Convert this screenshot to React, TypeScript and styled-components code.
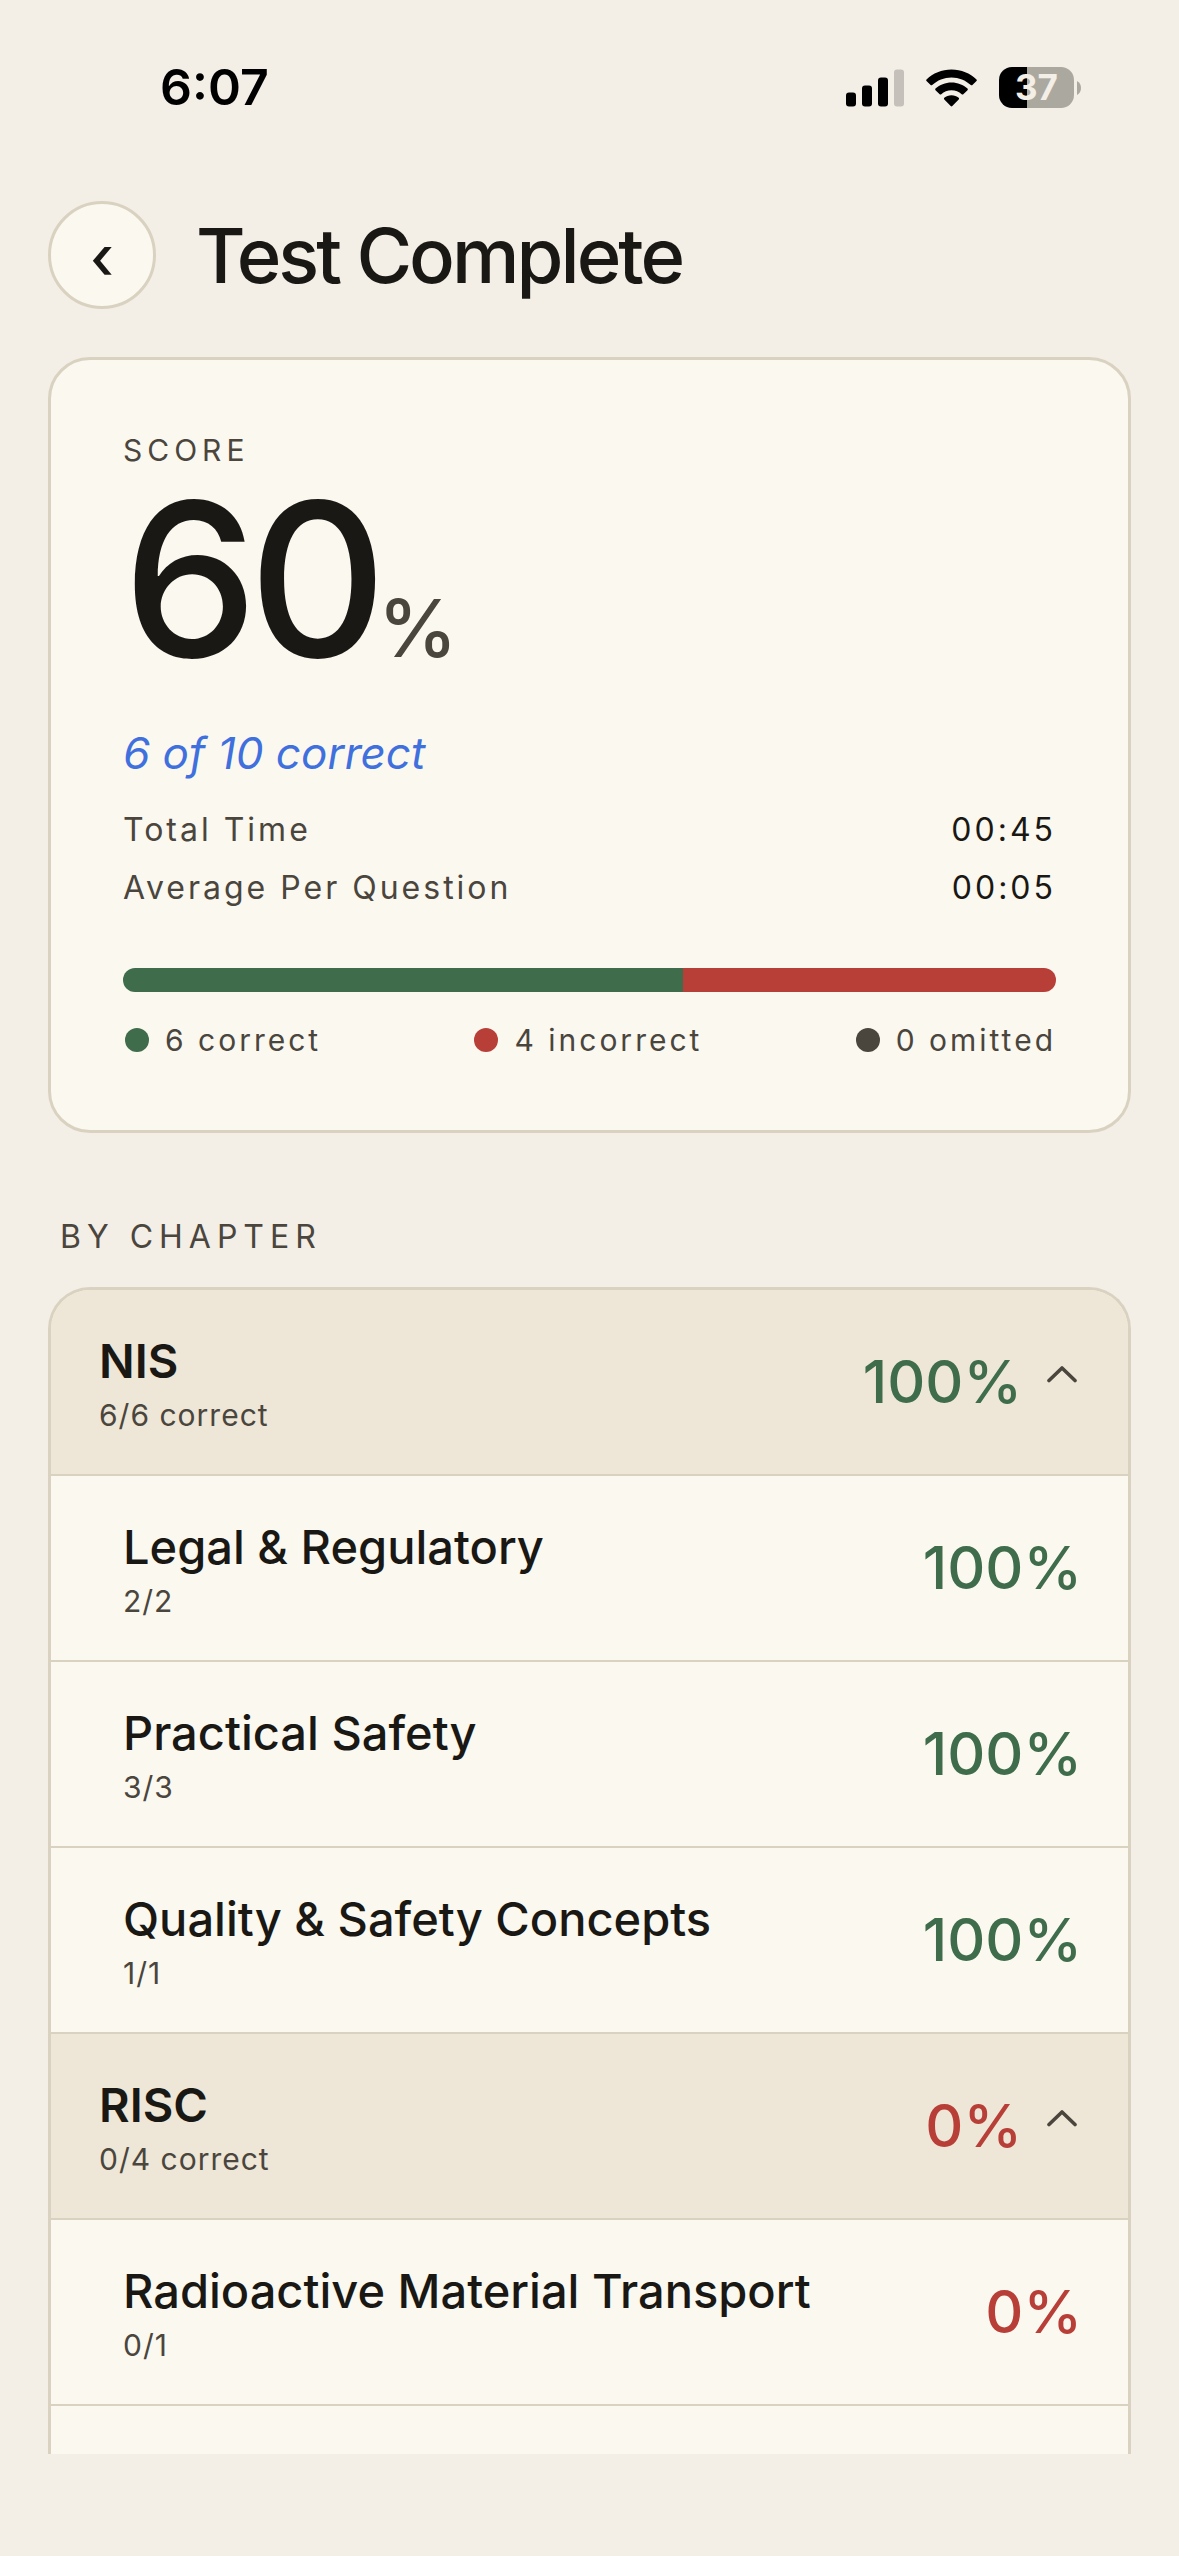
import React, { useState } from "react";
import styled, { createGlobalStyle } from "styled-components";

const color = {
  page: "#f3eee6",
  card: "#fbf8f0",
  band: "#eee6d6",
  line: "#d9d2c1",
  ink: "#1a1814",
  muted: "#4a453d",
  green: "#3f6c4b",
  red: "#b83f38",
  blue: "#3f70de",
};

const GlobalStyle = createGlobalStyle`
  *, *::before, *::after { box-sizing: border-box; }
  body {
    margin: 0;
    background: ${color.page};
    color: ${color.ink};
    font-family: Inter, "Liberation Sans", sans-serif;
  }
  h1, h2, p, dl, dd, ul { margin: 0; padding: 0; }
  ul { list-style: none; }
  button { font: inherit; color: inherit; cursor: pointer; }
`;

const Screen = styled.div`
  display: flex;
  flex-direction: column;
  height: 100vh;
  padding-bottom: 102px;
  overflow: hidden;
`;

const StatusBar = styled.div`
  display: flex;
  flex: none;
  align-items: center;
  justify-content: space-between;
  padding: 60px 98px 86px 160px;
`;

const Clock = styled.time`
  font-size: 50px;
  font-weight: 600;
  line-height: 55px;
  color: #000;
`;

const StatusIcons = styled.div`
  display: flex;
  align-items: center;
  gap: 22px;
`;

const Battery = styled.div`
  display: flex;
  align-items: center;
  gap: 3px;
`;

const BatteryBody = styled.div`
  display: flex;
  align-items: center;
  justify-content: center;
  width: 75px;
  height: 41px;
  border-radius: 13px;
  background: linear-gradient(to right, #000 37%, #aba8a0 37%);
  color: ${color.page};
  font-size: 35px;
  font-weight: 700;
  line-height: 41px;
`;

const TopBar = styled.header`
  display: flex;
  flex: none;
  align-items: center;
  gap: 40px;
  padding: 0 48px 48px;
`;

const BackButton = styled.button`
  display: flex;
  flex: none;
  align-items: center;
  justify-content: center;
  width: 108px;
  height: 108px;
  padding: 4px 0 0;
  border: 3px solid ${color.line};
  border-radius: 50%;
  background: ${color.card};
  font-size: 60px;
  font-weight: 500;
  line-height: 60px;
`;

const Title = styled.h1`
  font-size: 76px;
  font-weight: 500;
  line-height: 92px;
  letter-spacing: -3px;
`;

const Content = styled.main`
  display: flex;
  flex: 1;
  flex-direction: column;
  min-height: 0;
  padding: 0 48px;
`;

const ScoreCard = styled.section`
  flex: none;
  padding: 72px;
  border: 3px solid ${color.line};
  border-radius: 42px;
  background: ${color.card};
`;

const ScoreLabel = styled.h2`
  font-size: 30px;
  font-weight: 400;
  line-height: 36px;
  letter-spacing: 5px;
  color: ${color.muted};
`;

const ScoreValue = styled.p`
  font-size: 214px;
  font-weight: 500;
  line-height: 224px;
  letter-spacing: -9px;
`;

const PercentSign = styled.span`
  font-size: 80px;
  line-height: 1;
  letter-spacing: 0;
  color: ${color.muted};
`;

const ScoreNote = styled.p`
  margin-top: 32px;
  font-size: 44px;
  font-style: italic;
  line-height: 58px;
  color: ${color.blue};
`;

const Timings = styled.dl`
  display: flex;
  flex-direction: column;
  gap: 18px;
  margin-top: 28px;
`;

const Timing = styled.div`
  display: flex;
  justify-content: space-between;
  font-size: 32px;
  line-height: 40px;
  letter-spacing: 3px;
`;

const TimingName = styled.dt`
  color: ${color.muted};
`;

const Bar = styled.div`
  display: flex;
  height: 24px;
  margin-top: 60px;
  overflow: hidden;
  border-radius: 12px;
`;

const BarPart = styled.div<{ $tone: string }>`
  background: ${(p) => p.$tone};
`;

const Legend = styled.ul`
  display: flex;
  justify-content: space-between;
  margin-top: 30px;
`;

const LegendItem = styled.li`
  display: flex;
  align-items: center;
  gap: 16px;
  font-size: 30px;
  line-height: 36px;
  letter-spacing: 3px;
  color: ${color.muted};
`;

const Dot = styled.span<{ $tone: string }>`
  width: 24px;
  height: 24px;
  margin-left: 2px;
  border-radius: 50%;
  background: ${(p) => p.$tone};
`;

const SectionTitle = styled.h2`
  flex: none;
  padding: 84px 12px 30px;
  font-size: 32px;
  font-weight: 400;
  line-height: 40px;
  letter-spacing: 6px;
  color: ${color.muted};
`;

const ChapterList = styled.div`
  flex: 1;
  min-height: 0;
  overflow: hidden;
  border: 3px solid ${color.line};
  border-bottom: 0;
  border-radius: 42px 42px 0 0;
  background: ${color.card};
`;

const ChapterHead = styled.button`
  display: flex;
  align-items: center;
  justify-content: space-between;
  width: 100%;
  padding: 41px 46px 41px 48px;
  border: 0;
  border-bottom: 2px solid ${color.line};
  background: ${color.band};
  text-align: left;
`;

const TopicRow = styled.li`
  display: flex;
  align-items: center;
  justify-content: space-between;
  padding: 41px 46px 41px 72px;
  border-bottom: 2px solid ${color.line};
`;

const Labels = styled.span`
  display: flex;
  flex-direction: column;
  gap: 6px;
`;

const Name = styled.span<{ $strong?: boolean }>`
  font-size: 47px;
  font-weight: ${(p) => (p.$strong ? 600 : 500)};
  line-height: 60px;
`;

const Tally = styled.span`
  font-size: 30px;
  line-height: 36px;
  letter-spacing: 1px;
  color: ${color.muted};
`;

const Result = styled.span`
  display: flex;
  align-items: center;
  gap: 20px;
`;

const Percent = styled.span<{ $good: boolean }>`
  font-size: 59px;
  font-weight: 500;
  line-height: 72px;
  color: ${(p) => (p.$good ? color.green : color.red)};
`;

const ChevronSvg = styled.svg<{ $open: boolean }>`
  display: block;
  transform: ${(p) => (p.$open ? "none" : "rotate(180deg)")};
`;

function SignalIcon() {
  return (
    <svg width="58" height="38" viewBox="0 0 58 38" aria-hidden="true">
      <rect x="0" y="23.5" width="10" height="14" rx="3" />
      <rect x="16" y="16.5" width="10" height="21" rx="3" />
      <rect x="32" y="8.5" width="10" height="29" rx="3" />
      <rect x="48" y="0.5" width="10" height="37" rx="3" fill="#c5c0b9" />
    </svg>
  );
}

function WifiIcon() {
  return (
    <svg width="51" height="38" viewBox="0 0 51 38" aria-hidden="true">
      <path d="M25.5 .5C35.300 .5 44 4.300 50.500 10.400C51 10.900 51 11.500 50.500 12L46.400 16C46 16.400 45.300 16.400 44.800 16C39.700 11.200 32.900 8.400 25.500 8.400S11.300 11.200 6.200 16C5.700 16.400 5 16.400 4.600 16L.5 12C0 11.500 0 10.900 .5 10.400C7 4.300 15.700 .5 25.500 .5Z" />
      <path d="M25.500 13.400C31.700 13.400 37.300 15.700 41.500 19.600C42 20.100 42 20.700 41.500 21.200L37.300 25.200C36.900 25.600 36.200 25.600 35.700 25.200C33 22.800 29.400 21.300 25.500 21.300S18 22.800 15.300 25.200C14.800 25.600 14.100 25.600 13.700 25.200L9.500 21.200C9 20.700 9 20.100 9.500 19.600C13.700 15.700 19.300 13.400 25.500 13.400Z" />
      <path d="M25.500 26.200C28.300 26.200 30.800 27.200 32.700 28.800C33.200 29.200 33.200 29.900 32.700 30.400L26.300 37C25.800 37.500 25.200 37.500 24.700 37L18.300 30.400C17.800 29.900 17.800 29.200 18.300 28.800C20.200 27.200 22.700 26.200 25.500 26.200Z" />
    </svg>
  );
}

function BatteryTip() {
  return (
    <svg width="4" height="14" viewBox="0 0 4 14" aria-hidden="true">
      <path d="M0 0C2.500 1.200 4 4 4 7S2.500 12.800 0 14Z" fill="#aba8a0" />
    </svg>
  );
}

function Chevron({ open }: { open: boolean }) {
  return (
    <ChevronSvg $open={open} width="40" height="32" viewBox="0 0 40 32" aria-hidden="true">
      <path
        d="M7 14.500L20 2L33 14.500"
        fill="none"
        stroke={color.muted}
        strokeWidth="3.600"
        strokeLinecap="round"
        strokeLinejoin="round"
      />
    </ChevronSvg>
  );
}

interface Topic {
  name: string;
  right: number;
  total: number;
}

interface ChapterData {
  name: string;
  right: number;
  total: number;
  topics: Topic[];
}

const counts = { correct: 6, incorrect: 4, omitted: 0 };

const chapters: ChapterData[] = [
  {
    name: "NIS",
    right: 6,
    total: 6,
    topics: [
      { name: "Legal & Regulatory", right: 2, total: 2 },
      { name: "Practical Safety", right: 3, total: 3 },
      { name: "Quality & Safety Concepts", right: 1, total: 1 },
    ],
  },
  {
    name: "RISC",
    right: 0,
    total: 4,
    topics: [{ name: "Radioactive Material Transport", right: 0, total: 1 }],
  },
];

const percentOf = (right: number, total: number) => Math.round((right / total) * 100);

function Score({ value }: { value: number }) {
  return <Percent $good={value >= 50}>{value}%</Percent>;
}

function Chapter({ chapter }: { chapter: ChapterData }) {
  const [open, setOpen] = useState(true);
  return (
    <section>
      <ChapterHead type="button" aria-expanded={open} onClick={() => setOpen(!open)}>
        <Labels>
          <Name $strong>{chapter.name}</Name>
          <Tally>{`${chapter.right}/${chapter.total} correct`}</Tally>
        </Labels>
        <Result>
          <Score value={percentOf(chapter.right, chapter.total)} />
          <Chevron open={open} />
        </Result>
      </ChapterHead>
      {open && (
        <ul>
          {chapter.topics.map((topic) => (
            <TopicRow key={topic.name}>
              <Labels>
                <Name>{topic.name}</Name>
                <Tally>{`${topic.right}/${topic.total}`}</Tally>
              </Labels>
              <Score value={percentOf(topic.right, topic.total)} />
            </TopicRow>
          ))}
        </ul>
      )}
    </section>
  );
}

export default function App() {
  const total = counts.correct + counts.incorrect + counts.omitted;
  const legend = [
    { label: "correct", count: counts.correct, tone: color.green },
    { label: "incorrect", count: counts.incorrect, tone: color.red },
    { label: "omitted", count: counts.omitted, tone: color.muted },
  ];

  return (
    <>
      <GlobalStyle />
      <Screen>
        <StatusBar>
          <Clock>6:07</Clock>
          <StatusIcons>
            <SignalIcon />
            <WifiIcon />
            <Battery>
              <BatteryBody>37</BatteryBody>
              <BatteryTip />
            </Battery>
          </StatusIcons>
        </StatusBar>

        <TopBar>
          <BackButton type="button">‹</BackButton>
          <Title>Test Complete</Title>
        </TopBar>

        <Content>
          <ScoreCard>
            <ScoreLabel>SCORE</ScoreLabel>
            <ScoreValue>
              {percentOf(counts.correct, total)}
              <PercentSign>%</PercentSign>
            </ScoreValue>
            <ScoreNote>{`${counts.correct} of ${total} correct`}</ScoreNote>
            <Timings>
              <Timing>
                <TimingName>Total Time</TimingName>
                <dd>00:45</dd>
              </Timing>
              <Timing>
                <TimingName>Average Per Question</TimingName>
                <dd>00:05</dd>
              </Timing>
            </Timings>
            <Bar>
              {legend.map((part) => (
                <BarPart
                  key={part.label}
                  $tone={part.tone}
                  style={{ width: `${percentOf(part.count, total)}%` }}
                />
              ))}
            </Bar>
            <Legend>
              {legend.map((part) => (
                <LegendItem key={part.label}>
                  <Dot $tone={part.tone} />
                  {`${part.count} ${part.label}`}
                </LegendItem>
              ))}
            </Legend>
          </ScoreCard>

          <SectionTitle>BY CHAPTER</SectionTitle>
          <ChapterList>
            {chapters.map((chapter) => (
              <Chapter key={chapter.name} chapter={chapter} />
            ))}
          </ChapterList>
        </Content>
      </Screen>
    </>
  );
}
